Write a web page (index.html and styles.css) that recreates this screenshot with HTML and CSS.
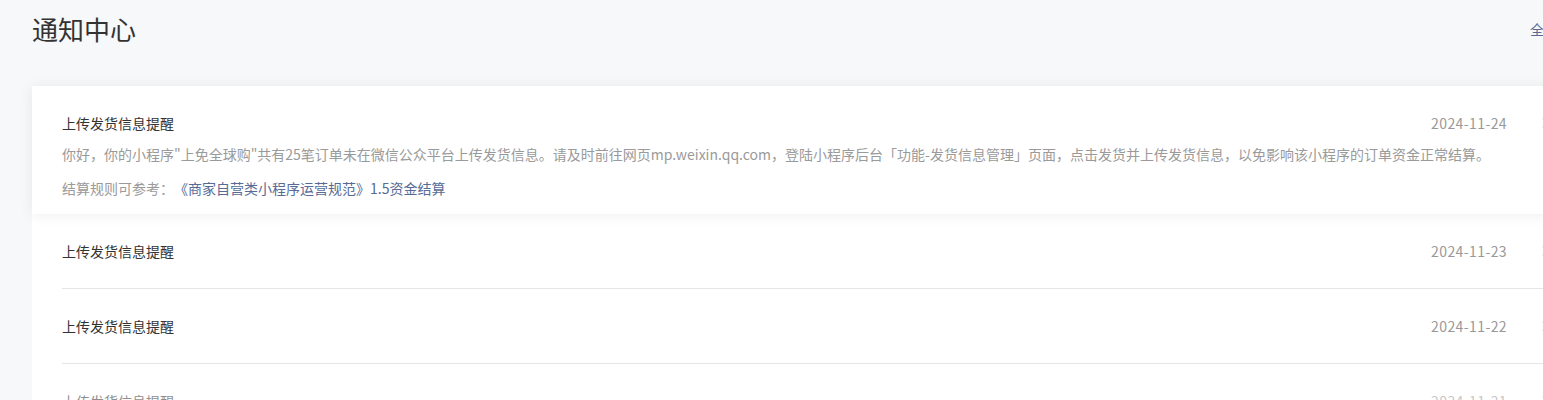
FILE: index.html
```html
<!DOCTYPE html>
<html lang="zh-CN">
<head>
<meta charset="utf-8">
<title>通知中心</title>
<link rel="stylesheet" href="styles.css">
</head>
<body>
<div class="page">
  <header class="header">
    <h1 class="title">通知中心</h1>
    <a class="mark-all">全部已读</a>
  </header>
  <ul class="list">
    <li class="item item-open">
      <div class="item-head">
        <span class="item-title">上传发货信息提醒</span>
        <span class="item-date">2024-11-24</span>
        <svg class="chev" width="8" height="12" viewBox="0 0 8 12"><path d="M1.5 1.5 6 6l-4.5 4.5" fill="none" stroke="#d6d6d6" stroke-width="1.2"/></svg>
      </div>
      <p class="desc">你好，你的小程序"上免全球购"共有25笔订单未在微信公众平台上传发货信息。请及时前往网页mp.weixin.qq.com，登陆小程序后台「功能-发货信息管理」页面，点击发货并上传发货信息，以免影响该小程序的订单资金正常结算。</p>
      <p class="desc desc-2">结算规则可参考：<a class="link">《商家自营类小程序运营规范》1.5资金结算</a></p>
    </li>
    <li class="item">
      <div class="row">
        <span class="item-title">上传发货信息提醒</span>
        <span class="item-date">2024-11-23</span>
        <svg class="chev" width="8" height="12" viewBox="0 0 8 12"><path d="M1.5 1.5 6 6l-4.5 4.5" fill="none" stroke="#d6d6d6" stroke-width="1.2"/></svg>
      </div>
    </li>
    <li class="item">
      <div class="row">
        <span class="item-title">上传发货信息提醒</span>
        <span class="item-date">2024-11-22</span>
        <svg class="chev" width="8" height="12" viewBox="0 0 8 12"><path d="M1.5 1.5 6 6l-4.5 4.5" fill="none" stroke="#d6d6d6" stroke-width="1.2"/></svg>
      </div>
    </li>
    <li class="item item-fading">
      <div class="row">
        <span class="item-title">上传发货信息提醒</span>
        <span class="item-date">2024-11-21</span>
        <svg class="chev" width="8" height="12" viewBox="0 0 8 12"><path d="M1.5 1.5 6 6l-4.5 4.5" fill="none" stroke="#d6d6d6" stroke-width="1.2"/></svg>
      </div>
    </li>
  </ul>
</div>
</body>
</html>
```
FILE: styles.css
```css
html, body {
  margin: 0;
  padding: 0;
  background: #f7f8fa;
  overflow: hidden;
  font-family: "Noto Sans CJK SC", "Noto Sans", sans-serif;
  text-spacing-trim: space-all;
}

.page {
  width: 1554px;
  padding: 0 0 0 32px;
}

.header {
  display: flex;
  align-items: center;
  justify-content: space-between;
  height: 58px;
  margin-bottom: 28px;
}

.title {
  margin: 0;
  font-size: 26px;
  font-weight: 400;
  color: #333;
  line-height: 36px;
}

.mark-all {
  font-size: 14px;
  color: #576b95;
  cursor: pointer;
}

.list {
  list-style: none;
  margin: 0;
  padding: 0;
  background: #fff;
}

.item {
  padding: 0 37px 0 30px;
  background: #fff;
}

.item-open {
  position: relative;
  z-index: 1;
  padding-top: 27px;
  padding-bottom: 15px;
  box-shadow: 0 1px 14px rgba(0, 0, 0, 0.07);
}

.item-fading {
  opacity: 0.55;
}

.item-head {
  display: flex;
  align-items: center;
  height: 20px;
}

.row {
  display: flex;
  align-items: center;
  height: 74px;
  border-bottom: 1px solid #e6e6e6;
}

.item-title {
  flex: 1;
  font-size: 14px;
  color: #333;
  line-height: 20px;
}

.item-date {
  font-size: 14px;
  letter-spacing: 0.4px;
  color: #999;
  line-height: 20px;
}

.chev {
  margin-left: 34px;
  flex: none;
}

.desc {
  margin: 10px 0 0;
  font-size: 14px;
  line-height: 22px;
  color: #9a9a9a;
  white-space: nowrap;
}

.desc-2 {
  margin-top: 12px;
}

.link {
  color: #576b95;
  cursor: pointer;
}
```
